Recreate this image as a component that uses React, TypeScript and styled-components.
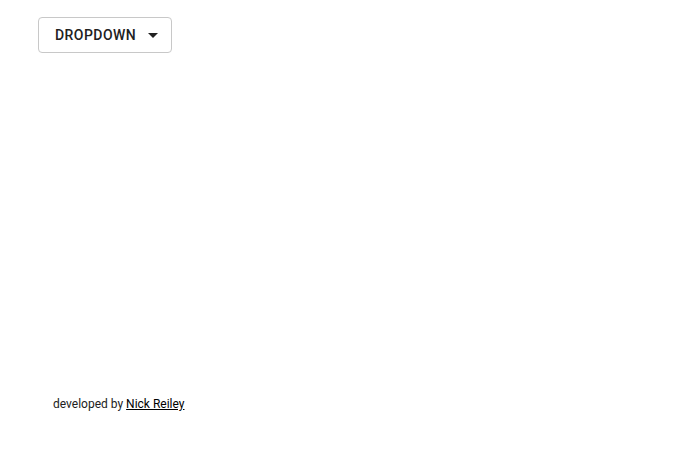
import React from "react";
import styled, { createGlobalStyle } from "styled-components";

const Global = createGlobalStyle`
  html, body { margin: 0; padding: 0; background: #fff; }
  body { font-family: Roboto, "Liberation Sans", sans-serif; }
`;

const Page = styled.div`
  height: 458px;
  display: flex;
  flex-direction: column;
  justify-content: space-between;
  box-sizing: border-box;
  padding: 17px 0 0 38px;
`;

const Button = styled.button`
  display: inline-flex;
  align-items: center;
  gap: 5px;
  height: 36px;
  box-sizing: border-box;
  padding: 0 6px 0 16px;
  background: #fff;
  border: 1px solid #c8c8c8;
  border-radius: 4px;
  font-family: Roboto, "Liberation Sans", sans-serif;
  font-size: 14px;
  font-weight: 500;
  letter-spacing: 0.45px;
  color: #212121;
  cursor: pointer;
  align-self: flex-start;
`;

const Footer = styled.footer`
  padding: 0 0 47px 15px;
  font-size: 12px;
  color: #212121;
  a { color: #000; text-decoration: underline; }
`;

export default function App() {
  return (
    <>
      <Global />
      <Page>
        <Button>
          DROPDOWN
          <svg width="24" height="24" viewBox="0 0 24 24">
            <path d="M7 10l5 5 5-5z" fill="#212121" />
          </svg>
        </Button>
        <Footer>
          developed by <a href="#">Nick Reiley</a>
        </Footer>
      </Page>
    </>
  );
}
